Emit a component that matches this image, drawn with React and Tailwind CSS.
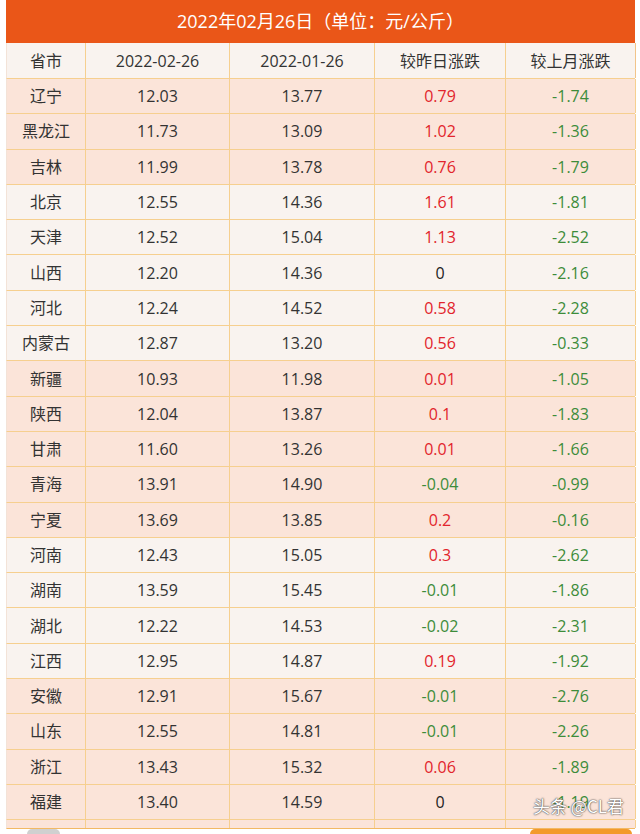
import React from 'react';

const rows = [
  ['辽宁', '12.03', '13.77', '0.79', '-1.74'],
  ['黑龙江', '11.73', '13.09', '1.02', '-1.36'],
  ['吉林', '11.99', '13.78', '0.76', '-1.79'],
  ['北京', '12.55', '14.36', '1.61', '-1.81'],
  ['天津', '12.52', '15.04', '1.13', '-2.52'],
  ['山西', '12.20', '14.36', '0', '-2.16'],
  ['河北', '12.24', '14.52', '0.58', '-2.28'],
  ['内蒙古', '12.87', '13.20', '0.56', '-0.33'],
  ['新疆', '10.93', '11.98', '0.01', '-1.05'],
  ['陕西', '12.04', '13.87', '0.1', '-1.83'],
  ['甘肃', '11.60', '13.26', '0.01', '-1.66'],
  ['青海', '13.91', '14.90', '-0.04', '-0.99'],
  ['宁夏', '13.69', '13.85', '0.2', '-0.16'],
  ['河南', '12.43', '15.05', '0.3', '-2.62'],
  ['湖南', '13.59', '15.45', '-0.01', '-1.86'],
  ['湖北', '12.22', '14.53', '-0.02', '-2.31'],
  ['江西', '12.95', '14.87', '0.19', '-1.92'],
  ['安徽', '12.91', '15.67', '-0.01', '-2.76'],
  ['山东', '12.55', '14.81', '-0.01', '-2.26'],
  ['浙江', '13.43', '15.32', '0.06', '-1.89'],
  ['福建', '13.40', '14.59', '0', '-1.19'],
];

// rows drawn in the lighter tint, the rest are pink
const lightRows = [3, 4, 5, 6, 7, 13, 14, 15, 16];

const changeColor = (v) => {
  const n = parseFloat(v);
  if (n > 0) return 'text-[#e2242c]';
  if (n < 0) return 'text-[#3d8c3a]';
  return 'text-[#222]';
};

const cell = 'flex items-center justify-center border-r border-[#f6cf8f]';

const App = () => {
  return (
    <div className="relative w-[640px] h-[834px] overflow-hidden bg-white font-['Open_Sans','Noto_Sans_CJK_SC',sans-serif]">
      <div className="ml-[6px] w-[629px]">
        <div className="h-[43px] bg-[#ea5618] flex items-center justify-center text-white text-[18px]">
          2022年02月26日（单位：元/公斤）
        </div>

        <div className="grid grid-cols-[79px_144px_145px_131px_130px] h-[36px] bg-[#f9f3ef] border-b border-[#f6cf8f] border-l border-l-[#f3e3d8] text-[16px] text-[#333]">
          <div className={cell}>省市</div>
          <div className={cell}>2022-02-26</div>
          <div className={cell}>2022-01-26</div>
          <div className={cell}>较昨日涨跌</div>
          <div className={cell + ' border-r-[#f2c48a]'}>较上月涨跌</div>
        </div>

        {rows.map((r, i) => (
          <div
            key={r[0]}
            className={`grid grid-cols-[79px_144px_145px_131px_130px] h-[35.3px] border-b border-[#f6cf8f] border-l border-l-[#f3e3d8] text-[16px] text-[#333] ${
              lightRows.includes(i) ? 'bg-[#f9f3ef]' : 'bg-[#fbe4d9]'
            }`}
          >
            <div className={cell}>{r[0]}</div>
            <div className={cell}>{r[1]}</div>
            <div className={cell}>{r[2]}</div>
            <div className={`${cell} ${changeColor(r[3])}`}>{r[3]}</div>
            <div className={`${cell} ${changeColor(r[4])}`}>{r[4]}</div>
          </div>
        ))}

        <div className="grid grid-cols-[79px_144px_145px_131px_130px] h-[9px] bg-[#fbe4d9] border-b border-[#f2b964] border-l border-l-[#f3e3d8]">
          <div className={cell} />
          <div className={cell} />
          <div className={cell} />
          <div className={cell} />
          <div className={cell} />
        </div>
      </div>

      {/* strip below the table */}
      <div className="flex items-end h-[5px]">
        <div className="ml-[27px] w-[33px] h-[5px] rounded-t-[6px] bg-[#d0d0d0]" />
        <div className="flex-1" />
        <div className="mr-[8px] w-[102px] h-[5px] rounded-t-[6px] bg-[#f39a2c]" />
      </div>

      <div className="absolute left-[533px] top-[793px] text-[17px] text-white [text-shadow:0_0_2px_#444,0_0_1px_#444] font-['Noto_Sans_CJK_SC',sans-serif]">
        头条 @CL君
      </div>
    </div>
  );
};

export default App;
